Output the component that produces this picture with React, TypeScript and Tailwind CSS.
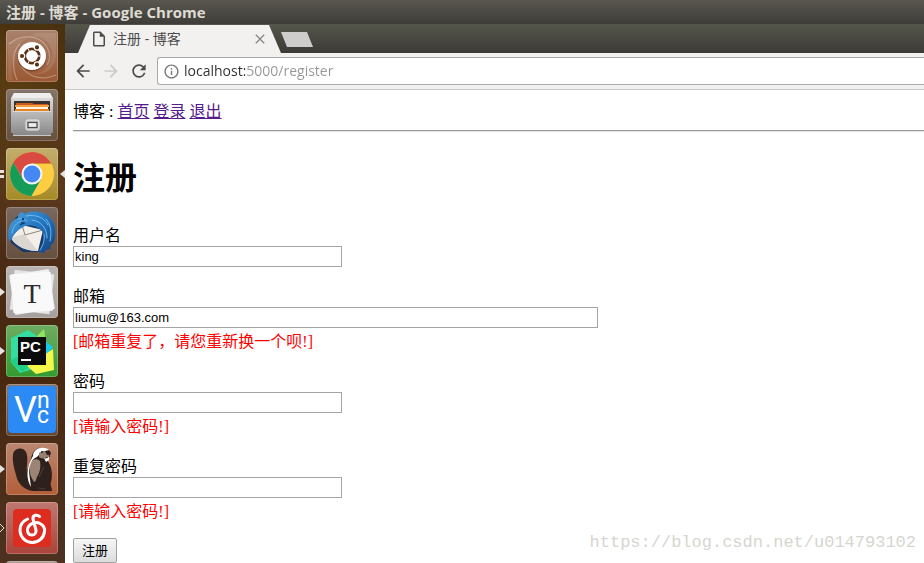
import type { ReactNode } from 'react';
import {
  MdArrowBack,
  MdArrowForward,
  MdClose,
  MdInfoOutline,
  MdOutlineInsertDriveFile,
  MdRefresh,
} from 'react-icons/md';

/* ---------- launcher icons ---------- */

const UbuntuIcon = () => (
  <svg viewBox="0 0 52 52" className="size-full">
    <path d="M7 50C4 32 8 14 24 7L2 12v38z" fill="#fff" fillOpacity="0.08" />
    <path d="M24 7c12-3 22 6 22 17-1 12-8 20-20 20 16 2 24-8 24-20V3H30z" fill="#fff" fillOpacity="0.1" />
    <g fill="none" stroke="#fff" strokeOpacity="0.3" strokeWidth="1.2">
      <path d="M3 14C14 4 33 4 41 17c4 7 3 14 0 18" />
      <path d="M50 45c-14 6-28 2-35-9" />
      <path d="M11 50C5 36 7 20 14 14" />
    </g>
    <circle cx="26" cy="27" r="14.5" fill="#3c1c0c" fillOpacity="0.35" />
    <circle cx="26" cy="26" r="14" fill="#fff" />
    <circle cx="26" cy="26" r="7.2" fill="none" stroke="#5c3013" strokeWidth="2.8" />
    <path d="M26 26l8.700 0M26 26l-5-9M26 26l-5 9" stroke="#fff" strokeWidth="1" />
    <circle cx="26" cy="26" r="5.600" fill="#fff" />
    <g fill="#5c3013" stroke="#fff" strokeWidth="1.2">
      <circle cx="16" cy="26" r="2.7" />
      <circle cx="31" cy="17.4" r="2.7" />
      <circle cx="31" cy="34.6" r="2.7" />
    </g>
  </svg>
);

const FilesIcon = () => (
  <svg viewBox="0 0 52 52" className="size-full">
    <defs>
      <linearGradient id="cabinet" x1="0" y1="0" x2="0" y2="1">
        <stop offset="0" stopColor="#e4e4e4" />
        <stop offset="1" stopColor="#8e8e8e" />
      </linearGradient>
      <linearGradient id="drawer" x1="0" y1="0" x2="0" y2="1">
        <stop offset="0" stopColor="#bdbdbd" />
        <stop offset="1" stopColor="#868686" />
      </linearGradient>
    </defs>
    <path d="M8 4h36l3 5v35H5V9z" fill="url(#cabinet)" />
    <path d="M8 4h36l2 5H6z" fill="#ededed" />
    <path d="M8 12h36v10H8z" fill="#3a3230" />
    <path d="M10 14h16l2 1h14v7H10z" fill="#c75b1c" />
    <path d="M9 16h34v2H9z" fill="#f79b43" />
    <path d="M10 18h32v2H10z" fill="#fff3df" />
    <path d="M9 20h34v2H9z" fill="#ef8020" />
    <path d="M7 22h38v25H7z" fill="url(#drawer)" />
    <path d="M7 22.5h38" stroke="#dedede" />
    <path d="M7 46.5h38" stroke="#c8c8c8" />
    <rect x="20" y="31" width="13" height="10" rx="1.5" fill="#bebebe" stroke="#ededed" />
    <rect x="22" y="33.500" width="9" height="5" fill="#ededed" stroke="#4a4a4a" strokeWidth="1.2" />
  </svg>
);

const ChromeIcon = () => (
  <svg viewBox="0 0 52 52" className="size-full">
    <circle cx="26" cy="26" r="22" fill="#ffcd42" />
    <path d="M7.3 14.5A22 22 0 0 1 45.3 15.5H26L16.9 31.2z" fill="#d94b41" />
    <path d="M7.3 14.5A22 22 0 0 0 25.4 48L35.1 31.2 16.9 31.2z" fill="#149c58" />
    <path d="M26 15.5h19.3" stroke="#b8912c" strokeOpacity="0.6" />
    <circle cx="26" cy="26" r="10.5" fill="#f4f4f4" />
    <circle cx="26" cy="26" r="8.4" fill="#4587f3" />
  </svg>
);

const ThunderbirdIcon = () => (
  <svg viewBox="0 0 52 52" className="size-full">
    <defs>
      <linearGradient id="bird" x1="0" y1="0" x2="1" y2="1">
        <stop offset="0" stopColor="#4aa3e0" />
        <stop offset="0.5" stopColor="#2373bd" />
        <stop offset="1" stopColor="#14407f" />
      </linearGradient>
    </defs>
    <path d="M5 36C2 25 5 13 12 9l18-4c10 2 18 12 18 21 0 10-7 18-18 19H17z" fill="#153a6b" />
    <path d="M16 18l21 5-5 21C21 44 10 40 5 31z" fill="#f3eee8" />
    <path d="M5 31l13-4 14 17C21 44 10 40 5 31z" fill="#dcd6d0" />
    <path d="M16 18l3 10 18-5" fill="none" stroke="#8d8782" strokeWidth="1" />
    <path
      d="M3 34C1 24 3 17 9 12l3-1c0-3 1-5 4-6l3 2c9-5 21-2 26 5 5 6 5 15 3 23l-3 3-1 4-4 1-2 3-6-1c7-7 8-16 4-21-5-5-11-7-17-5-5 3-11 6-13 13z"
      fill="url(#bird)"
    />
    <g fill="none" stroke="#6dbcf0" strokeWidth="1" strokeLinecap="round">
      <path d="M20 9c9-2 18 1 22 9" />
      <path d="M26 13c9 1 15 8 15 18" />
      <path d="M40 12c5 6 6 13 4 22" />
      <path d="M38 27c1 6-1 11-4 16" />
      <path d="M6 26c1-6 4-10 9-12" />
      <path d="M12 12c3-1 6 0 9 2" />
    </g>
    <path d="M16 15l-3 4 7-3z" fill="#163b6c" />
    <circle cx="17" cy="12" r="1" fill="#0b1d3b" />
  </svg>
);

const TyporaIcon = () => (
  <svg viewBox="0 0 52 52" className="size-full">
    <rect x="6" y="6" width="40" height="40" fill="#e4e4e4" transform="rotate(7 26 26)" />
    <rect x="6" y="6" width="40" height="40" fill="#f0f0f0" transform="rotate(-9 26 26)" />
    <rect x="6" y="7" width="40" height="39" rx="1" fill="#f9f9f9" transform="rotate(-4 26 26)" />
    <text x="26" y="37" textAnchor="middle" fill="#2c2c2c" fontSize="28" fontFamily="Liberation Serif, serif">
      T
    </text>
  </svg>
);

const PyCharmIcon = () => (
  <svg viewBox="0 0 52 52" className="size-full">
    <path d="M5 13L22 5l12 8-10 32-10 3L5 37z" fill="#35dba0" />
    <path d="M4 36l6-4 14 10-8 5z" fill="#20cf86" />
    <path d="M38 4l2 12-14 0z" fill="#8fe35e" />
    <path d="M38 15l9 7-8 10z" fill="#18c7ec" />
    <path d="M38 30l9-6 1 21-18 4-9-8z" fill="#f6f74b" />
    <rect x="12" y="12" width="28" height="28" fill="#0b0b0b" />
    <text x="14" y="27" fill="#fff" fontSize="15" fontWeight="700" fontFamily="Liberation Sans, sans-serif">
      PC
    </text>
    <rect x="15" y="34" width="10" height="2" fill="#fff" />
  </svg>
);

const VncIcon = () => (
  <svg viewBox="0 0 52 52" className="size-full">
    <rect x="2" y="2" width="48" height="47" rx="4" fill="#2b8af4" />
    <text x="8" y="38" fill="#fff" fontSize="36" fontFamily="Roboto, sans-serif">
      V
      <tspan x="31" y="24" fontSize="23">n</tspan>
      <tspan x="31" y="39" fontSize="23">c</tspan>
    </text>
  </svg>
);

const BeaverIcon = () => (
  <svg viewBox="0 0 52 52" className="size-full">
    <path d="M7 11c1-6 10-8 13-2 3 7 0 14 1 20 0 5 3 9 6 12v7c-9-1-15-7-17-16C8 25 6 18 7 11z" fill="#32221d" />
    <path d="M26 12c2-5 7-9 13-7 4 1 6 4 5 8-1 2-2 3-3 4 5 6 6 15 4 22-1 4 1 5 1 9H26c-3-7-6-12-5-20z" fill="#2e201c" />
    <path d="M24 20c2-4 7-5 10-2 1 6 0 11-3 16-1 2-1 5-3 5-3-5-6-11-4-19z" fill="#9b8474" />
    <path d="M27 13c0-6 7-10 12-8 2 0 3 1 4 2l-8 2c-2 2-3 5-6 6-4 2-6 9-6 14l2 15c-5-8-5-20 2-31z" fill="#fff" />
    <path d="M33 10c3-2 6-2 9-1l1 4c-4 3-8 3-10 1z" fill="#988071" />
    <path d="M39 8h5l1 3-4 1z" fill="#2b1d19" />
    <path d="M38 15c2 1 4 0 5-2v4l-3 2z" fill="#fff" />
    <circle cx="36" cy="9" r="1" fill="#2b1d19" />
    <path d="M33 34l5-10M33 45l6 1" stroke="#4c3932" strokeWidth="1.2" />
  </svg>
);

const MusicIcon = () => (
  <svg viewBox="0 0 52 52" className="size-full">
    <rect x="7" y="7" width="38" height="38" rx="4" fill="#dd2d20" />
    <path
      d="M33.500 14.500c-2-2-7-2-6.500 2.500l3 11c.6 3-1.500 5-4 5-4 0-5.500-4-4-7.500 2-4.500 8-6 12-4 3 1.500 5 4.500 4.500 8-.6 6.500-6 11-12 11-7 0-12.500-5.500-12.500-12.500 0-5 3-9 7.500-11"
      fill="none"
      stroke="#fff"
      strokeWidth="3"
      strokeLinecap="round"
      strokeLinejoin="round"
    />
  </svg>
);

/* ---------- launcher ---------- */

interface LauncherItem {
  name: string;
  tile: string;
  icon: ReactNode;
  mark?: 'arrow' | 'double' | 'outline';
}

const launcherItems: LauncherItem[] = [
  { name: 'Ubuntu', tile: 'from-[#a9826c] to-[#9a5832]', icon: <UbuntuIcon /> },
  { name: 'Files', tile: 'from-[#857468] to-[#66503d]', icon: <FilesIcon /> },
  { name: 'Chrome', tile: 'from-[#c3ad6c] to-[#a58a22]', icon: <ChromeIcon />, mark: 'double' },
  { name: 'Thunderbird', tile: 'from-[#78685f] to-[#66503f]', icon: <ThunderbirdIcon /> },
  { name: 'Typora', tile: 'from-[#b9b5b2] to-[#a5a09d]', icon: <TyporaIcon />, mark: 'arrow' },
  { name: 'PyCharm', tile: 'from-[#6dac61] to-[#329b2f]', icon: <PyCharmIcon />, mark: 'arrow' },
  { name: 'VNC', tile: 'from-[#8b7468] to-[#65452f]', icon: <VncIcon /> },
  { name: 'DBeaver', tile: 'from-[#bb8670] to-[#b25e38]', icon: <BeaverIcon />, mark: 'arrow' },
  { name: 'Music', tile: 'from-[#bd7871] to-[#a94439]', icon: <MusicIcon />, mark: 'outline' },
  { name: 'More', tile: 'from-[#a89c94] to-[#7b6b60]', icon: null },
];

const RunningMark = ({ mark }: { mark: LauncherItem['mark'] }) => (
  <svg viewBox="0 0 6 10" className="absolute top-1/2 left-0 h-[10px] w-[6px] -translate-y-1/2">
    {mark === 'arrow' && <path d="M0 1l5 4-5 4z" fill="#e6e2df" />}
    {mark === 'outline' && <path d="M0 1l4 4-4 4" fill="none" stroke="#e6e2df" />}
    {mark === 'double' && <path d="M0 1h4v3H0zM0 6h4v3H0z" fill="#e6e2df" />}
  </svg>
);

const Launcher = () => (
  <nav className="w-[65px] shrink-0 overflow-hidden bg-[#45280f] bg-[radial-gradient(circle_at_20%_12%,#5a3d12,transparent_35%),radial-gradient(circle_at_80%_30%,#5c3620,transparent_25%),linear-gradient(180deg,#35210b,#4b2c1a_30%,#49280f_65%,#4d3221)] pt-[6px]">
    <ul className="flex flex-col gap-[7px]">
      {launcherItems.map((item) => (
        <li key={item.name} className="relative flex justify-start pl-[6px]">
          {item.mark && <RunningMark mark={item.mark} />}
          <button
            type="button"
            aria-label={item.name}
            className={`size-[52px] rounded-[4px] bg-linear-to-b shadow-[inset_0_0_0_1px_rgba(255,255,255,0.22)] ${item.tile}`}
          >
            {item.icon}
          </button>
          {item.mark === 'double' && (
            <svg viewBox="0 0 6 10" className="absolute top-1/2 right-0 h-[10px] w-[6px] -translate-y-1/2">
              <path d="M6 1L1 5l5 4z" fill="#e6e2df" />
            </svg>
          )}
        </li>
      ))}
    </ul>
  </nav>
);

/* ---------- browser chrome ---------- */

const TabStrip = () => (
  <div className="flex h-[29px] items-end bg-linear-to-b from-[#55564b] to-[#3c3b37] pl-[13px]">
    <div className="flex h-7 w-[203px] items-center bg-[#f2f1f0] pr-[13px] pl-3 text-[#4c4c4c] [clip-path:polygon(12px_0,calc(100%-12px)_0,100%_100%,0_100%)]">
      <MdOutlineInsertDriveFile className="size-[18px] shrink-0" />
      <span className="ml-[5px] flex-1 truncate text-sm">注册 - 博客</span>
      <button type="button" aria-label="Close tab" className="text-[#888]">
        <MdClose className="size-4" />
      </button>
    </div>
    <button
      type="button"
      aria-label="New tab"
      className="mb-[6px] h-[15px] w-8 bg-[#cfcdcc] [clip-path:polygon(0_0,26px_0,100%_100%,6px_100%)]"
    />
  </div>
);

const Toolbar = () => (
  <div className="flex h-[37px] items-center border-b border-[#c9c8c7] bg-[#f2f1f0] pl-2 text-[#4a4a4a]">
    <button type="button" aria-label="Back">
      <MdArrowBack className="size-5" />
    </button>
    <button type="button" aria-label="Forward" className="ml-2 text-[#cbcac9]" disabled>
      <MdArrowForward className="size-5" />
    </button>
    <button type="button" aria-label="Reload" className="ml-2">
      <MdRefresh className="size-5" />
    </button>
    <div className="ml-2 flex h-7 flex-1 items-center rounded-l-[3px] border border-r-0 border-[#aaa] bg-white pl-[5px]">
      <MdInfoOutline className="size-[17px] shrink-0 text-[#777]" />
      <input
        type="text"
        aria-label="Address"
        defaultValue="localhost:5000/register"
        className="ml-1 min-w-0 flex-1 bg-[linear-gradient(90deg,#2e2e2e_61px,#969696_61px)] bg-clip-text text-sm text-transparent outline-none"
      />
    </div>
  </div>
);

/* ---------- page ---------- */

interface FieldProps {
  id: string;
  label: string;
  type?: string;
  value?: string;
  error?: string;
  wide?: boolean;
}

const Field = ({ id, label, type = 'text', value = '', error, wide }: FieldProps) => (
  <div className="flex flex-col items-start">
    <label htmlFor={id} className="leading-5">
      {label}
    </label>
    <input
      id={id}
      type={type}
      defaultValue={value}
      className={`h-[21px] max-w-full border border-[#a5a5a5] bg-white px-px font-['Liberation_Sans',sans-serif] text-[13px] outline-none ${wide ? 'w-[525px]' : 'w-[269px]'}`}
    />
    {error && <p className="mt-1 leading-5 text-[#f00]">{error}</p>}
  </div>
);

const RegisterPage = () => (
  <main className="flex-1 overflow-hidden bg-white px-2 pt-3 font-['Liberation_Serif','Noto_Sans_CJK_SC',serif] text-base text-black">
    <div className="flex gap-1 leading-5">
      <span>博客 :</span>
      <a href="#home" className="text-[#551a8b] underline">首页</a>
      <a href="#login" className="text-[#551a8b] underline">登录</a>
      <a href="#logout" className="text-[#551a8b] underline">退出</a>
    </div>
    <hr className="-mr-2 mt-2 border-t border-b border-t-[#999] border-b-[#e4e4e4]" />
    <h1 className="mt-[22px] mb-6 text-[32px] leading-[48px] font-bold">注册</h1>
    <form className="flex flex-col items-start" onSubmit={(e) => e.preventDefault()}>
      <div className="flex w-full flex-col gap-5">
        <Field id="username" label="用户名" value="king" />
        <Field id="email" label="邮箱" value="liumu@163.com" error="[邮箱重复了，请您重新换一个呗!]" wide />
        <Field id="password" label="密码" type="password" error="[请输入密码!]" />
        <Field id="confirm" label="重复密码" type="password" error="[请输入密码!]" />
      </div>
      <button
        type="submit"
        className="mt-4 h-[25px] rounded-[2px] border border-[#a0a0a0] bg-linear-to-b from-[#f6f6f6] to-[#dcdcdc] px-2 font-['Liberation_Sans','Noto_Sans_CJK_SC',sans-serif] text-[13px]"
      >
        注册
      </button>
    </form>
  </main>
);

const App = () => (
  <div className="relative flex h-screen flex-col overflow-hidden font-['Open_Sans','Noto_Sans_CJK_SC',sans-serif]">
    <header className="flex h-6 shrink-0 items-center bg-linear-to-b from-[#59574f] to-[#3e3d39] px-[6px] text-[15px] font-bold text-[#dfdbd2]">
      注册 - 博客 - Google Chrome
    </header>
    <div className="flex min-h-0 flex-1">
      <Launcher />
      <div className="flex min-w-0 flex-1 flex-col">
        <TabStrip />
        <Toolbar />
        <RegisterPage />
      </div>
    </div>
    <span className="absolute right-2 bottom-2 font-['Liberation_Mono',monospace] text-[17px] text-[#d6d6d0]">
      https://blog.csdn.net/u014793102
    </span>
  </div>
);

export default App;
